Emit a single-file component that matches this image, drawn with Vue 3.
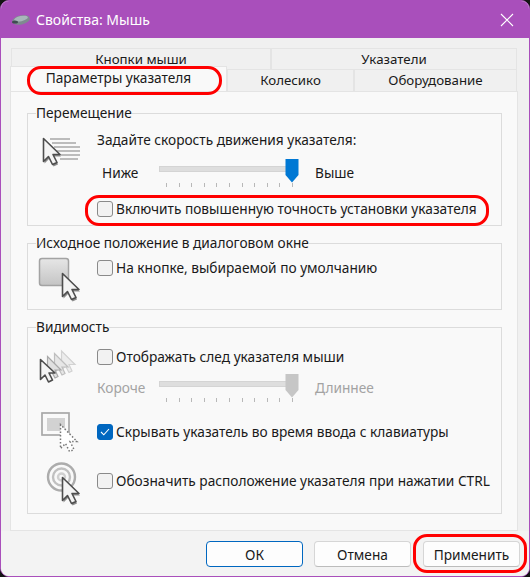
<template>
  <div class="window">
    <header class="titlebar">
      <svg class="mouse" width="20" height="12" viewBox="0 0 20 12">
        <ellipse cx="10" cy="6" rx="9" ry="4.500" transform="rotate(-12 10 6)" fill="#7f8a90" />
        <ellipse cx="10" cy="4.600" rx="7" ry="2.600" transform="rotate(-12 10 4.600)" fill="#a8b6ba" />
        <ellipse cx="4" cy="8" rx="3" ry="1.600" fill="#3f4c52" />
      </svg>
      <span class="title">Свойства: Мышь</span>
      <svg class="close" width="14" height="14" viewBox="0 0 14 14">
        <path d="M1 1l12 12M13 1L1 13" stroke="#fff" stroke-width="1.100" fill="none" />
      </svg>
    </header>

    <div class="body">
      <div class="tabs">
        <div class="tab-row top">
          <div class="tab" style="width: 260px">Кнопки мыши</div>
          <div class="tab" style="width: 246px">Указатели</div>
        </div>
        <div class="tab-row">
          <div class="tab active" style="width: 217px">Параметры указателя</div>
          <div class="tab" style="width: 127px">Колесико</div>
          <div class="tab" style="width: 163px">Оборудование</div>
        </div>
      </div>

      <div class="page">
        <section class="group g1">
          <div class="legend">Перемещение</div>
          <div class="row">
            <svg class="icon" width="69" height="50" viewBox="0 -9 69 50">
              <g filter="url(#soft)" stroke="#a8a8a8" stroke-width="1.400">
                <path d="M22 7h20M24 11h24M26 15h26M28 19h24M30 23h22M32 27h18" />
              </g>
              <path d="M16.500 8.500v23l5-5 4 8 4.500-2-4-8h7z" fill="#8c8c8c" filter="url(#soft)" />
              <path d="M15.500 6.500v23l5-5 4 8 4.500-2-4-8h7z" fill="#f4f4f4" stroke="#4d4d4d" stroke-width="1.600" stroke-linejoin="round" />
            </svg>
            <div class="col">
              <div class="speed-label">Задайте скорость движения указателя:</div>
              <div class="slider-row">
                <span class="low">Ниже</span>
                <div class="slider">
                  <div class="track"></div>
                  <svg class="thumb" width="14" height="24" viewBox="0 0 14 24"><path d="M0.500 0h13v16L7 23.500 0.500 16z" fill="#0078d4" /></svg>
                  <div class="ticks"><i v-for="n in 11" :key="n"></i></div>
                </div>
                <span class="high">Выше</span>
              </div>
              <label class="check precision"><span class="box"></span>Включить повышенную точность установки указателя</label>
            </div>
          </div>
        </section>

        <section class="group g2">
          <div class="legend">Исходное положение в диалоговом окне</div>
          <div class="row">
            <svg class="icon" width="69" height="50" viewBox="0 2 69 50">
              <defs>
                <linearGradient id="btn" x1="0" y1="0" x2="0" y2="1">
                  <stop offset="0" stop-color="#e6e6e6" />
                  <stop offset="1" stop-color="#c4c4c4" />
                </linearGradient>
                <filter id="soft" x="-20%" y="-20%" width="140%" height="140%"><feGaussianBlur stdDeviation="0.700" /></filter>
              </defs>
              <rect x="11.500" y="7.500" width="29" height="27" rx="2.500" fill="url(#btn)" stroke="#a3a3a3" stroke-width="1.500" />
              <path d="M35.500 24.500v23l5-5 4 8 4.500-2-4-8h7z" fill="#8c8c8c" filter="url(#soft)" />
              <path d="M34.500 22.500v23l5-5 4 8 4.500-2-4-8h7z" fill="#f4f4f4" stroke="#4d4d4d" stroke-width="1.600" stroke-linejoin="round" />
            </svg>
            <label class="check home"><span class="box"></span>На кнопке, выбираемой по умолчанию</label>
          </div>
        </section>

        <section class="group g3">
          <div class="legend">Видимость</div>
          <div class="row trail-row">
            <svg class="icon" width="69" height="50" viewBox="0 0 69 50">
              <g filter="url(#soft)" stroke-width="1.200">
                <path d="M33.500 9v19l4-4 3.500 6.500 3-1.500-3-6.500h6z" fill="#ececec" stroke="#d2d2d2" />
                <path d="M26.500 11.500v19l4-4 3.500 6.500 3-1.500-3-6.500h6z" fill="#e6e6e6" stroke="#bebebe" />
                <path d="M19.500 14.500v19l4-4 3.500 6.500 3-1.500-3-6.500h6z" fill="#e0e0e0" stroke="#a8a8a8" />
              </g>
              <path d="M12.500 17.500v20l4.500-4.500 3.500 7 4-2-3.500-7h6z" fill="#f4f4f4" stroke="#4d4d4d" stroke-width="1.600" stroke-linejoin="round" />
            </svg>
            <div class="col">
              <label class="check"><span class="box"></span>Отображать след указателя мыши</label>
              <div class="slider-row trail-slider">
                <span class="low muted">Короче</span>
                <div class="slider">
                  <div class="track"></div>
                  <svg class="thumb" width="14" height="24" viewBox="0 0 14 24"><path d="M0.500 0h13v16L7 23.500 0.500 16z" fill="#c6c6c6" /></svg>
                  <div class="ticks"><i v-for="n in 11" :key="n"></i></div>
                </div>
                <span class="high muted">Длиннее</span>
              </div>
            </div>
          </div>
          <div class="row hide-row">
            <svg class="icon" width="69" height="50" viewBox="0 0 69 50">
              <rect x="14" y="7" width="27" height="22" fill="none" stroke="#a8a8a8" stroke-width="1.700" />
              <rect x="19" y="12" width="18" height="13" fill="#d2d2d2" />
              <path d="M32.500 18.500v24l5-5 4 8 4.500-2-4-8h7z" fill="#fff" stroke="#777" stroke-width="1.500" stroke-dasharray="1.500 2" />
            </svg>
            <label class="check"><span class="box on">
              <svg width="10" height="8" viewBox="0 0 10 8"><path d="M1 4l2.800 2.800L9 1" fill="none" stroke="#fff" stroke-width="1.100" /></svg>
            </span>Скрывать указатель во время ввода с клавиатуры</label>
          </div>
          <div class="row locate-row">
            <svg class="icon" width="69" height="50" viewBox="0 0 69 50">
              <g fill="none" stroke-width="2.400">
                <circle cx="33.500" cy="21" r="13.500" stroke="#acacac" />
                <circle cx="33.500" cy="21" r="8.500" stroke="#c0c0c0" />
                <circle cx="33.500" cy="21" r="3.500" stroke="#d0d0d0" />
              </g>
              <path d="M35.500 23.500v23l5-5 4 8 4.500-2-4-8h7z" fill="#8c8c8c" filter="url(#soft)" />
              <path d="M34.500 21.500v23l5-5 4 8 4.500-2-4-8h7z" fill="#f4f4f4" stroke="#4d4d4d" stroke-width="1.600" stroke-linejoin="round" />
            </svg>
            <label class="check"><span class="box"></span>Обозначить расположение указателя при нажатии CTRL</label>
          </div>
        </section>
      </div>

      <footer class="actions">
        <button class="btn primary">ОК</button>
        <button class="btn">Отмена</button>
        <button class="btn">Применить</button>
      </footer>
    </div>

    <div class="mark mark-tab"></div>
    <div class="mark mark-check"></div>
    <div class="mark mark-apply"></div>
  </div>
</template>

<script setup>
</script>

<style>
html, body {
  background: #141414;
}
</style>

<style scoped>
.window {
  position: relative;
  width: 530px;
  height: 577px;
  box-sizing: border-box;
  border: 1px solid #a94fbb;
  border-radius: 9px;
  overflow: hidden;
  background: #f0f0f0;
  display: flex;
  flex-direction: column;
  font-family: "Noto Sans", sans-serif;
  font-size: 13.700px;
  color: #1a1a1a;
}

.titlebar {
  height: 37px;
  flex-shrink: 0;
  background: #a94fbb;
  color: #fff;
  display: flex;
  align-items: center;
  padding: 0 15px 0 10px;
  font-size: 14px;
}
.mouse {
  margin-right: 5px;
}
.close {
  margin-left: auto;
}

.body {
  flex: 1;
  display: flex;
  flex-direction: column;
  min-height: 0;
}

.tabs {
  padding: 10px 0 0 9px;
  height: 43px;
  flex-shrink: 0;
  position: relative;
  z-index: 1;
}
.tab-row {
  display: flex;
  height: 22px;
}
.tab-row.top {
  height: 21px;
  margin-left: 1px;
}
.tab {
  box-sizing: border-box;
  border: 1px solid #e4e4e4;
  border-bottom: none;
  display: flex;
  justify-content: center;
  align-items: center;
  font-size: 13.300px;
  padding-bottom: 1px;
}
.tab.active {
  background: #f9f9f9;
  font-size: 13.700px;
  height: 25px;
  margin-top: -3px;
  padding-bottom: 3px;
}

.page {
  box-sizing: border-box;
  height: 440px;
  margin: 0 11px 0 9px;
  border: 1px solid #e4e4e4;
  background: #f9f9f9;
  padding: 21px 15px 0 16px;
}

.group {
  box-sizing: border-box;
  border: 1px solid #dcdcdc;
}
.g1 {
  height: 113px;
}
.g2 {
  height: 67px;
  margin-top: 17px;
}
.g3 {
  height: 187px;
  margin-top: 17px;
}
.legend {
  width: fit-content;
  margin: -11px 0 0 8px;
  height: 20px;
  line-height: 20px;
  background: #f9f9f9;
}

.row {
  display: flex;
  align-items: flex-start;
}
.icon {
  flex-shrink: 0;
}
.col {
  display: flex;
  flex-direction: column;
}

.speed-label {
  margin-top: 7px;
  line-height: 20px;
}
.slider-row {
  display: flex;
  align-items: flex-start;
  height: 36px;
  margin-top: 10px;
}
.low {
  width: 62px;
  padding: 3px 0 0 5px;
  box-sizing: border-box;
  line-height: 20px;
}
.high {
  margin-left: 16px;
  padding-top: 3px;
  line-height: 20px;
}
.muted {
  color: #a3a3a3;
}
.slider {
  position: relative;
  width: 140px;
  height: 30px;
}
.track {
  margin-top: 6px;
  width: 134px;
  height: 6px;
  box-sizing: border-box;
  background: #dedede;
  border: 1px solid #d4d4d4;
}
.thumb {
  position: absolute;
  left: 126px;
  top: -1px;
}
.ticks {
  display: flex;
  justify-content: space-between;
  width: 127px;
  margin: 11px 0 0 7px;
}
.ticks i {
  width: 1px;
  height: 4px;
  background: #b8b8b8;
}

.check {
  display: flex;
  align-items: center;
  height: 20px;
  line-height: 20px;
  white-space: nowrap;
}
.box {
  box-sizing: border-box;
  width: 16px;
  height: 16px;
  margin-right: 3px;
  border: 1px solid #8a8a8a;
  border-radius: 3px;
  background: #f2f2f2;
  display: flex;
  align-items: center;
  justify-content: center;
  flex-shrink: 0;
}
.box.on {
  background: #0067c0;
  border-color: #0067c0;
}
.precision {
  margin-top: 3px;
}
.home {
  margin-top: 5px;
}
.trail-row {
  margin-top: 5px;
}
.trail-row .check {
  margin-top: 5px;
}
.trail-slider {
  margin-top: 8px;
}
.trail-slider .low {
  padding-left: 0;
}
.hide-row {
  margin-top: -5px;
}
.hide-row .check {
  margin-top: 16px;
}
.locate-row .check {
  margin-top: 15px;
}

.actions {
  flex: 1;
  display: flex;
  justify-content: flex-end;
  gap: 11px;
  padding: 10px 9px 0 0;
  background: #f3f3f3;
}
.btn {
  width: 97px;
  height: 26px;
  box-sizing: border-box;
  border: 1px solid #d6d6d6;
  border-bottom-color: #bcbcbc;
  border-radius: 4px;
  background: #fdfdfd;
  color: #1a1a1a;
  font: inherit;
  padding: 0;
}
.btn:last-child {
  margin-left: 1px;
}
.btn.primary {
  border-color: #0067c0;
}

.mark {
  position: absolute;
  z-index: 2;
  box-sizing: border-box;
  border: 3px solid #f00;
  border-radius: 14px;
}
.mark-tab {
  left: 26px;
  top: 65px;
  width: 195px;
  height: 29px;
}
.mark-check {
  left: 84px;
  top: 194px;
  width: 404px;
  height: 31px;
}
.mark-apply {
  left: 412px;
  top: 533px;
  width: 114px;
  height: 39px;
}
</style>
